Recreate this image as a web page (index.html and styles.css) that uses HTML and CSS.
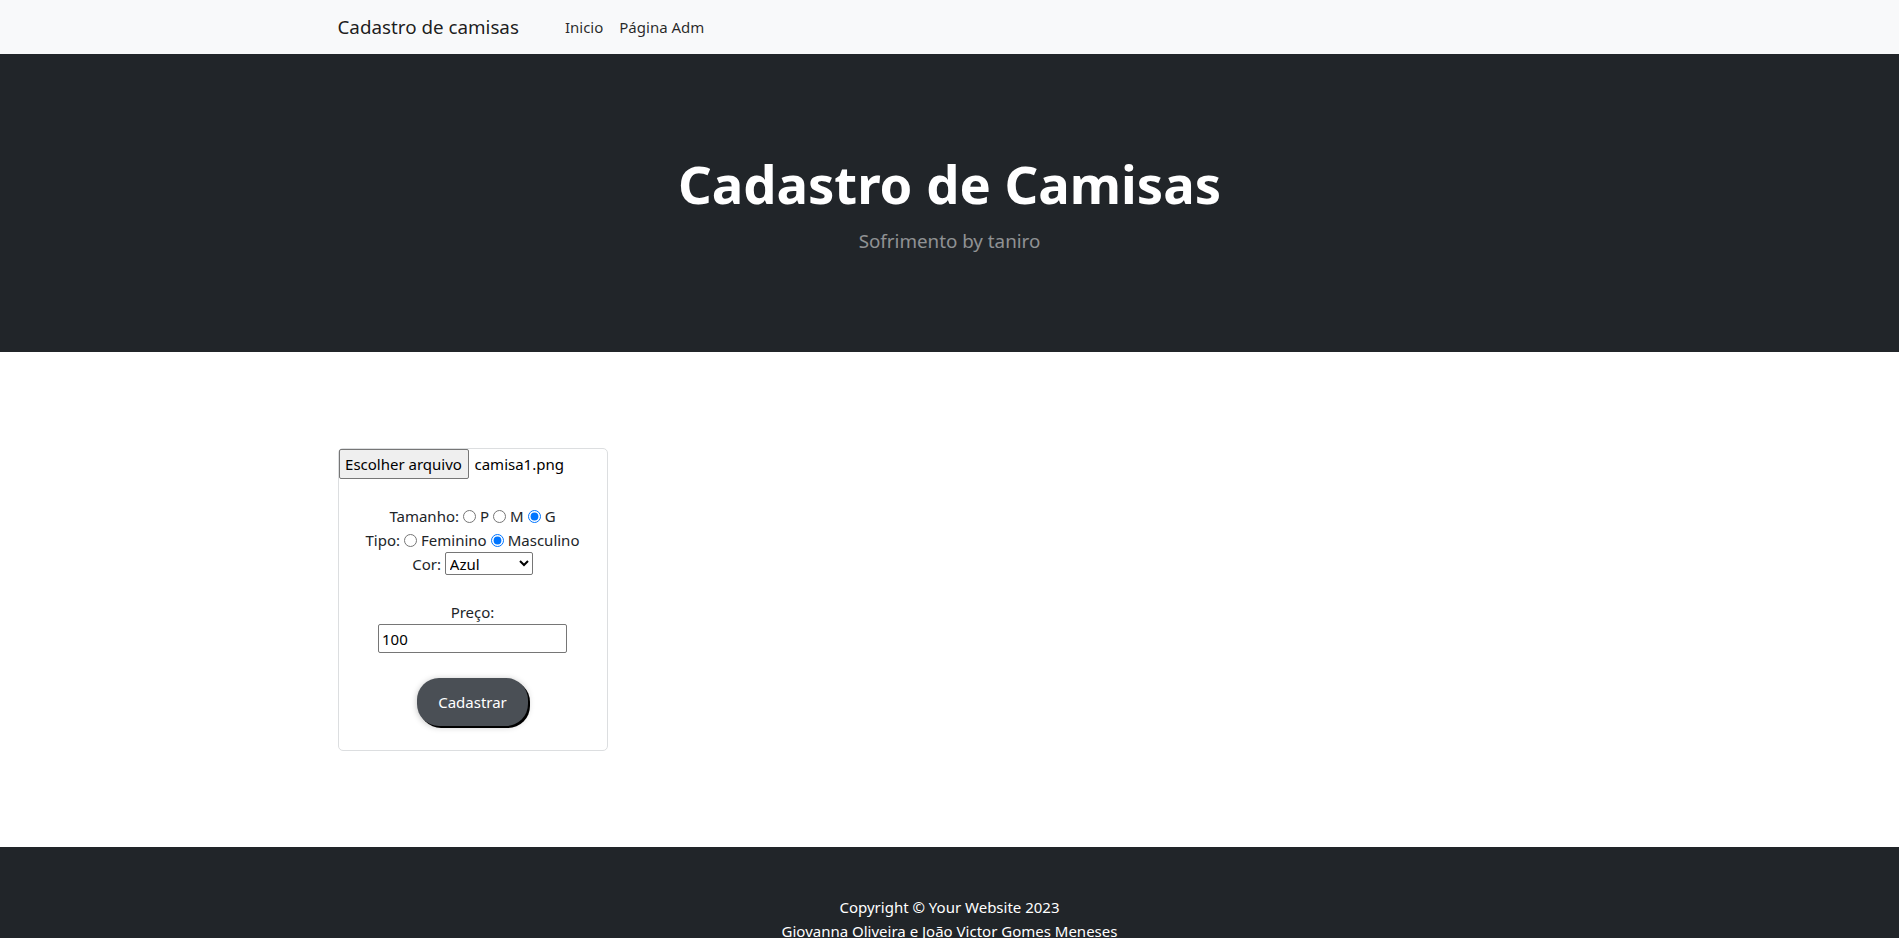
FILE: index.html
```html
<!DOCTYPE html>
<html lang="pt-BR">
<head>
<meta charset="utf-8">
<title>Cadastro de camisas</title>
<link rel="stylesheet" href="styles.css">
</head>
<body>
<nav class="navbar">
  <div class="container nav-inner">
    <a class="brand" href="#">Cadastro de camisas</a>
    <ul class="nav-links">
      <li><a href="#" class="nav-link active">Inicio</a></li>
      <li><a href="#" class="nav-link">Página Adm</a></li>
    </ul>
  </div>
</nav>
<header class="hero">
  <div class="container hero-inner">
    <h1 class="hero-title">Cadastro de Camisas</h1>
    <p class="hero-lead">Sofrimento by taniro</p>
  </div>
</header>
<section class="main">
  <div class="container">
    <form class="shirt-form">
      <div class="file-row">
        <span class="file-btn">Escolher arquivo</span><span class="file-name">camisa1.png</span>
      </div>
      <div class="line first">Tamanho:<input type="radio" name="tam" class="radio">P<input type="radio" name="tam" class="radio">M<input type="radio" name="tam" class="radio" checked>G</div>
      <div class="line">Tipo:<input type="radio" name="tipo" class="radio">Feminino<input type="radio" name="tipo" class="radio" checked>Masculino</div>
      <div class="line">Cor: <select class="color-select"><option>Azul</option><option>Preto</option><option>Branco</option></select></div>
      <div class="line price-label">Preço:</div>
      <input type="text" class="price-input" value="100">
      <button type="button" class="submit-btn">Cadastrar</button>
    </form>
  </div>
</section>
<footer class="footer">
  <div class="container">
    <p class="footer-text">Copyright © Your Website 2023</p>
    <p class="footer-text">Giovanna Oliveira e João Victor Gomes Meneses</p>
  </div>
</footer>
</body>
</html>
```
FILE: styles.css
```css
* { box-sizing: border-box; }
html, body { margin: 0; padding: 0; }
body {
  font-family: "Noto Sans", "Open Sans", sans-serif;
  font-size: 15px;
  line-height: 24px;
  color: #212529;
  background: #fff;
}
.container {
  max-width: 1320px;
  margin: 0 auto;
  padding: 0 48px;
}
.navbar {
  background: #f8f9fa;
  height: 54px;
}
.nav-inner {
  display: flex;
  align-items: center;
  height: 54px;
}
.brand {
  font-size: 18.8px;
  color: rgba(0,0,0,.9);
  text-decoration: none;
  margin-right: 16px;
  line-height: 30px;
}
.nav-links {
  display: flex;
  list-style: none;
  margin: 0 0 0 22px;
  padding: 0;
}
.nav-link {
  display: block;
  padding: 8px;
  color: rgba(0,0,0,.85);
  text-decoration: none;
  font-size: 15px;
}
.hero {
  background: #212529;
  padding: 96px 0;
}
.hero-inner { text-align: center; }
.hero-title {
  margin: 0 0 8px;
  font-size: 52.6px;
  line-height: 68px;
  font-weight: 700;
  color: #fff;
}
.hero-lead {
  margin: 0;
  font-size: 18.8px;
  line-height: 30px;
  color: rgba(255,255,255,.5);
}
.main {
  padding: 96px 0 96px;
}
.shirt-form {
  width: 270px;
  border: 1px solid #dcdee0;
  border-radius: 5px;
  display: flex;
  flex-direction: column;
  align-items: center;
  padding-bottom: 24px;
}
.file-row {
  align-self: flex-start;
  display: flex;
  align-items: center;
  height: 30px;
}
.file-btn {
  display: inline-flex;
  align-items: center;
  justify-content: center;
  width: 130px;
  height: 30px;
  background: #efefef;
  border: 1px solid #767676;
  border-radius: 2px;
  color: #000;
}
.file-name {
  margin-left: 6px;
  color: #000;
}
.line {
  height: 24px;
  line-height: 24px;
  white-space: nowrap;
}
.line.first { margin-top: 25px; }
.radio {
  width: 13px;
  height: 13px;
  margin: 3px 4px 0 4px;
  vertical-align: -1px;
}
.color-select {
  width: 88px;
  height: 23px;
  font-family: inherit;
  font-size: 15px;
  border: 1px solid #767676;
  border-radius: 2px;
  background: #fff;
  color: #000;
  vertical-align: top;
}
.price-label { margin-top: 24px; }
.price-input {
  width: 189px;
  height: 29px;
  font-family: inherit;
  font-size: 15px;
  border: 1px solid #767676;
  border-radius: 2px;
  padding: 0 3px;
  color: #000;
}
.submit-btn {
  margin-top: 25px;
  width: 111px;
  height: 48px;
  border: none;
  border-radius: 22px;
  background: #4a4f55;
  color: #fff;
  font-family: inherit;
  font-size: 15px;
  box-shadow: 2px 2px 0 #000, 0 1px 6px rgba(0,0,0,.25);
}
.footer {
  background: #212529;
  padding: 48px 0;
}
.footer-text {
  margin: 0;
  text-align: center;
  color: #fff;
}
```
